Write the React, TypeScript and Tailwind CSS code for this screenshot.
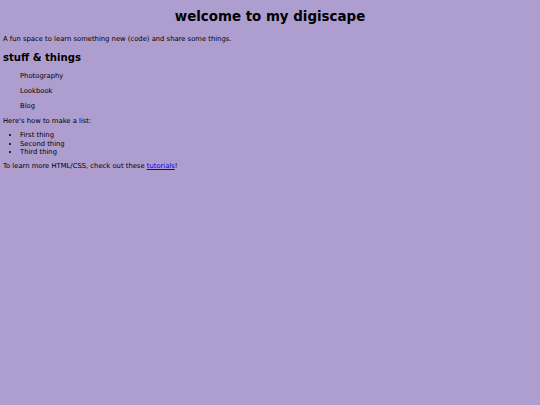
import React from 'react';

const links = ['Photography', 'Lookbook', 'Blog'];
const things = ['First thing', 'Second thing', 'Third thing'];

export default function App() {
    return (
        <div className="min-h-screen bg-[#ae9dcf] text-black px-[3px] pt-[8px] text-[6.8px] leading-[8.5px] font-['DejaVu_Sans',sans-serif]">
            <h1 className="text-center text-[13.4px] leading-[18px] font-bold">welcome to my digiscape</h1>
            <p className="mt-[9px]">A fun space to learn something new (code) and share some things.</p>
            <h2 className="mt-[7px] text-[10.1px] leading-[14px] font-bold">stuff &amp; things</h2>
            <nav className="mt-[7px] pl-[17px] flex flex-col gap-[6.5px]">
                {links.map((l) => (
                    <a key={l} className="block">{l}</a>
                ))}
            </nav>
            <p className="mt-[6.5px]">Here's how to make a list:</p>
            <ul className="mt-[6px] pl-[17px] list-disc">
                {things.map((t) => (
                    <li key={t}>{t}</li>
                ))}
            </ul>
            <p className="mt-[5px]">
                To learn more HTML/CSS, check out these <a className="text-[#0000ee] underline">tutorials</a>!
            </p>
        </div>
    );
}
